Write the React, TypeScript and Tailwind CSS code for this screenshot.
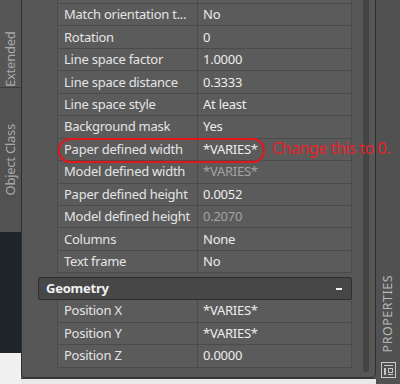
import React from "react";

type Row = { name: string; value: string; dim?: boolean };

const textRows: Row[] = [
  { name: "Match orientation t...", value: "No" },
  { name: "Rotation", value: "0" },
  { name: "Line space factor", value: "1.0000" },
  { name: "Line space distance", value: "0.3333" },
  { name: "Line space style", value: "At least" },
  { name: "Background mask", value: "Yes" },
  { name: "Paper defined width", value: "*VARIES*" },
  { name: "Model defined width", value: "*VARIES*", dim: true },
  { name: "Paper defined height", value: "0.0052" },
  { name: "Model defined height", value: "0.2070", dim: true },
  { name: "Columns", value: "None" },
  { name: "Text frame", value: "No" },
];

const geoRows: Row[] = [
  { name: "Position X", value: "*VARIES*" },
  { name: "Position Y", value: "*VARIES*" },
  { name: "Position Z", value: "0.0000" },
];

function PropRow({ row, h = "h-[22.45px]" }: { row?: Row; h?: string }) {
  return (
    <div className={`flex ${h} shrink-0`}>
      <div className="w-[19px] shrink-0" />
      <div className="flex w-[141px] shrink-0 items-center overflow-hidden whitespace-nowrap border-b border-l border-r border-[#4b4b4b] bg-[#5b5b5b] pl-[6px] text-[#e4e4e4]">
        {row?.name}
      </div>
      <div
        className={`flex flex-1 items-center overflow-hidden whitespace-nowrap border-b border-r border-[#4b4b4b] bg-[#5b5b5b] pl-[5px] ${
          row?.dim ? "text-[#a3a3a3]" : "text-[#ececec]"
        }`}
      >
        {row?.value}
      </div>
    </div>
  );
}

function PaletteIcon() {
  return (
    <svg width="15" height="16" viewBox="0 0 15 16" fill="none" stroke="#c8c8c8" strokeWidth="1">
      <rect x="0.5" y="0.5" width="14" height="15" />
      <line x1="3" y1="3.5" x2="12" y2="3.5" />
      <rect x="3" y="6" width="2" height="7" fill="#c8c8c8" stroke="none" />
      <rect x="7.5" y="6.5" width="4" height="4" />
      <line x1="7" y1="12.5" x2="12" y2="12.5" />
    </svg>
  );
}

export default function App() {
  return (
    <div className="relative flex h-[384px] w-[400px] overflow-hidden bg-[#555555] font-['Noto_Sans',sans-serif] text-[13px] leading-none tracking-[-0.25px]">
      {/* left tabs */}
      <div className="flex w-[21px] shrink-0 flex-col">
        <div className="flex h-[88px] shrink-0 justify-center border-b border-[#3c3c3c] bg-[#565656] pt-[8px]">
          <span className="rotate-180 text-[13px] text-[#a9a9a9] [writing-mode:vertical-rl]">Extended</span>
        </div>
        <div className="flex h-[144px] shrink-0 items-center justify-center bg-[#525252]">
          <span className="rotate-180 text-[13px] text-[#a9a9a9] [writing-mode:vertical-rl]">Object Class</span>
        </div>
        <div className="h-[121px] shrink-0 bg-[#1f252b]" />
        <div className="flex-1 bg-[#f0f0f0]" />
      </div>

      {/* palette */}
      <div className="flex w-[355px] shrink-0 flex-col">
        <div className="flex h-[378px] shrink-0 rounded-b-[5px] border-b border-l border-r border-[#2f2f2f] bg-[#575757]">
          <div className="w-[16px] shrink-0" />
          <div className="flex w-[314px] shrink-0 flex-col">
            <PropRow h="h-[4px]" />
            {textRows.map((r) => (
              <PropRow key={r.name} row={r} />
            ))}
            <div className="mt-[4px] flex h-[23px] shrink-0 items-center justify-between rounded-[2px] border border-[#2e2e2e] bg-[#474747] pl-[7px] pr-[9px]">
              <span className="font-bold text-[#f2f2f2]">Geometry</span>
              <span className="h-[2px] w-[6px] bg-[#f0f0f0]" />
            </div>
            {geoRows.map((r) => (
              <PropRow key={r.name} row={r} />
            ))}
          </div>
          <div className="flex w-[23px] shrink-0 pl-[11px]">
            <div className="h-[372px] w-[6px] rounded-b-[3px] bg-[#444444]" />
          </div>
        </div>
        <div className="flex-1 border-t border-[#3a3a3a] bg-[#e9e9e9]" />
      </div>

      {/* right title strip */}
      <div className="flex w-[24px] shrink-0 flex-col items-center justify-end bg-[#515151] pb-[6px]">
        <span className="mb-[10px] rotate-180 text-[12.5px] tracking-[0.5px] text-[#b5b5b5] [writing-mode:vertical-rl]">
          PROPERTIES
        </span>
        <PaletteIcon />
      </div>

      {/* annotation */}
      <div className="absolute left-[58px] top-[138px] h-[25px] w-[207px] rounded-[12px] border-2 border-[#e3161c]" />
      <div className="absolute left-[272px] top-[140px] whitespace-nowrap text-[16px] tracking-[-0.5px] text-[#e8222a]">
        Change this to 0.
      </div>
    </div>
  );
}
